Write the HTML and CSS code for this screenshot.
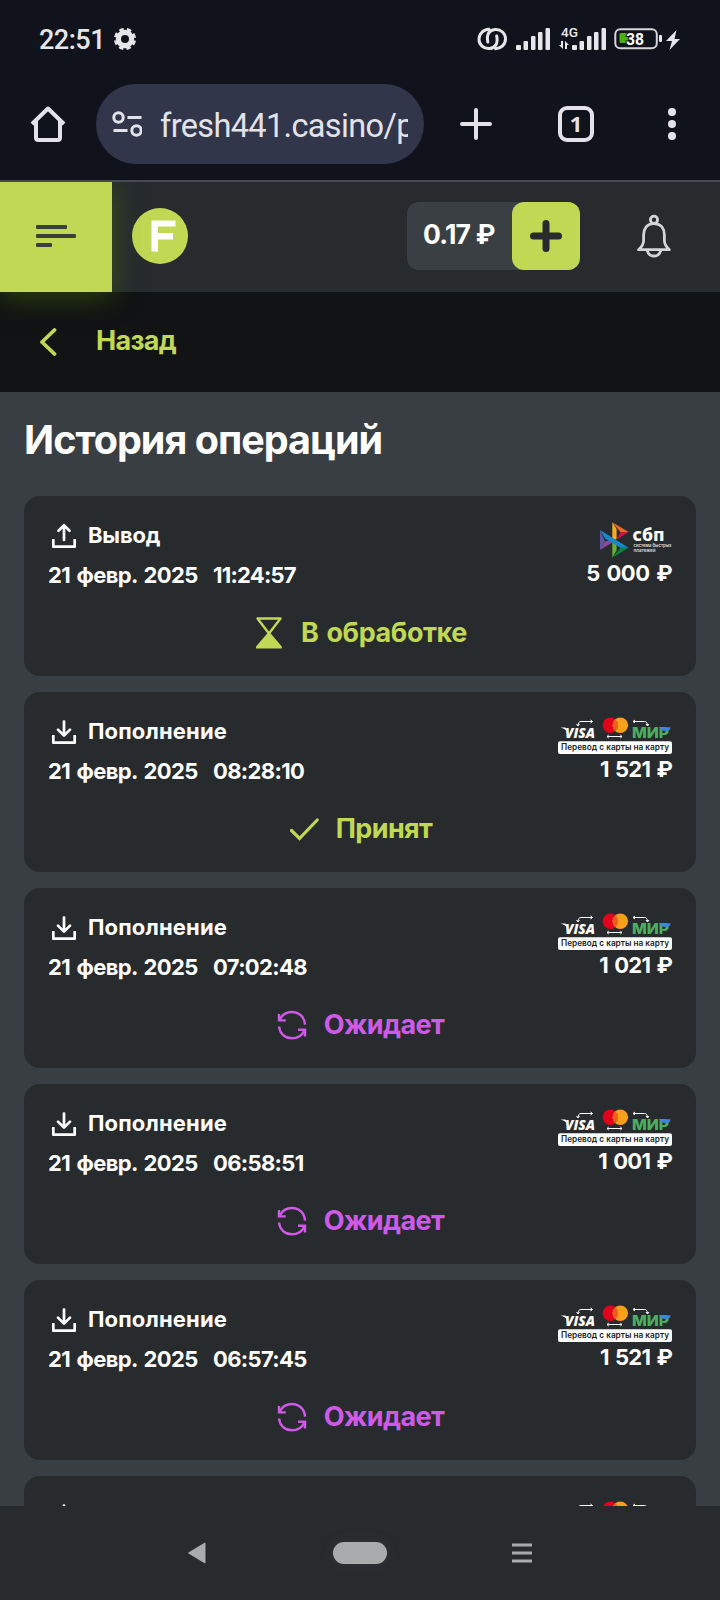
FILE: index.html
```html
<!DOCTYPE html>
<html lang="ru">
<head>
<meta charset="utf-8">
<title>История операций</title>
<link rel="stylesheet" href="styles.css">
</head>
<body>
<svg class="defs" width="0" height="0" aria-hidden="true">
  <symbol id="upload" viewBox="0 0 32 32"><g fill="none" stroke="#fff" stroke-width="2.7" stroke-linecap="round" stroke-linejoin="round"><path d="M16 20V6M10.500 10.800 16 5.300l5.500 5.500"/><path stroke-linecap="square" d="M5.300 20.300v6.400h21.400v-6.400"/></g></symbol>
  <symbol id="download" viewBox="0 0 32 32"><g fill="none" stroke="#fff" stroke-width="2.7" stroke-linecap="round" stroke-linejoin="round"><path d="M16 5.500V19M10 13.600l6 6 6-6"/><path stroke-linecap="square" d="M5.300 20.300v6.400h21.400v-6.400"/></g></symbol>
  <symbol id="hourglass" viewBox="0 0 32 32"><path d="M4.500 1.500h23L16 16.500z" fill="none" stroke="#c0d853" stroke-width="2.400" stroke-linejoin="round"/><path d="M16 14.500 28.800 29.500v2H3v-2z" fill="#c0d853"/></symbol>
  <symbol id="check" viewBox="0 0 32 32"><path d="M3.500 17.500l8 8L29.200 7" fill="none" stroke="#c0d853" stroke-width="3.200" stroke-linecap="round" stroke-linejoin="miter"/></symbol>
  <symbol id="refresh" viewBox="0 0 32 32"><g fill="none" stroke="#d05ae8" stroke-width="2.400"><path d="M29 15.600C28.500 8 23 3 16 3 10.500 3 6 6 3.800 10.500"/><path d="M3 5v6.400h6.800"/><path d="M3 17.500C3.700 24.500 9 29.300 16 29.300c5.500 0 10-2.800 12.200-7.300"/><path d="M29 27.500v-6.800h-7"/></g></symbol>
</svg>
<div class="phone">
  <div class="statusbar">
    <span class="clock">22:51</span>
    <svg class="gear" width="24" height="24" viewBox="0 0 24 24"><circle cx="12" cy="12" r="6.600" fill="none" stroke="#e6e6ea" stroke-width="5.200"/><circle cx="12" cy="12" r="9.700" fill="none" stroke="#e6e6ea" stroke-width="2.800" stroke-dasharray="4.400 3.218" stroke-dashoffset="-1.600"/></svg>
    <svg class="indicators" width="206" height="30" viewBox="0 0 206 30">
      <g fill="none" stroke="#e6e6ea" stroke-width="3" stroke-linecap="round"><path d="M12 5.200C6.500 5.400 2 9.700 2 15.200s4.500 9.800 10.500 9.300c6-.5 8.700-5 7.200-12.500"/><path d="M18.500 24.800c5.500-.2 10-4.300 10-9.800S24 5 18 5.500c-6 .5-8.700 5-7.200 12.500"/></g>
      <g fill="#e6e6ea"><rect x="39" y="21" width="5" height="5" rx="1"/><rect x="46.500" y="17" width="4.500" height="9" rx="1"/><rect x="54" y="12" width="4.500" height="14" rx="1"/><rect x="61" y="8" width="4.500" height="18" rx="1"/><rect x="68.500" y="4" width="4.500" height="22" rx="1"/>
      <rect x="95" y="21" width="5" height="5" rx="1"/><rect x="102.500" y="17" width="4.500" height="9" rx="1"/><rect x="110" y="12" width="4.500" height="14" rx="1"/><rect x="117" y="8" width="4.500" height="18" rx="1"/><rect x="124.500" y="4" width="4.500" height="22" rx="1"/>
      <path d="M84 17h2v8l-4-4h2zM89 25h-1v-8l4 4h-2v4z"/><rect x="182" y="11" width="3" height="7" rx="1"/><path d="M199.500 6 189 17h6l-2.500 9L203 15h-5.500z"/></g>
      <text class="net" x="84" y="13" textLength="17" lengthAdjust="spacingAndGlyphs">4G</text>
      <rect x="138.300" y="5.300" width="41.500" height="19" rx="5" fill="none" stroke="#d5d5da" stroke-width="2"/><path d="M144 9h8v10h-8q-1.500 0-1.500-1.500v-7Q142.500 9 144 9z" fill="#4caf12"/>
      <text class="charge" x="149" y="21" textLength="18" lengthAdjust="spacingAndGlyphs">38</text>
    </svg>
  </div>
  <div class="browser">
    <svg width="36" height="36" viewBox="0 0 36 36"><path d="M2 18 18 2.500 34 18M6 15v16.500Q6 34 8.500 34h19q2.500 0 2.500-2.500V15" fill="none" stroke="#e4e2e9" stroke-width="4" stroke-linejoin="round"/></svg>
    <div class="address">
      <svg width="30" height="26" viewBox="0 0 30 26" fill="none" stroke="#e4e2e9" stroke-width="3"><circle cx="6.500" cy="6.500" r="4.700"/><circle cx="24.500" cy="19.500" r="4.700"/><path d="M15.500 6.500h14M1.500 19.500h14"/></svg>
      <span class="url">fresh441.casino/p</span>
    </div>
    <svg class="newtab" width="32" height="32" viewBox="0 0 32 32"><path d="M16 2v28M2 16h28" stroke="#e4e2e9" stroke-width="4" stroke-linecap="round"/></svg>
    <span class="tabs">1</span>
    <svg class="more" width="8" height="32" viewBox="0 0 8 32" fill="#e4e2e9"><circle cx="4" cy="4" r="4"/><circle cx="4" cy="16" r="4"/><circle cx="4" cy="28" r="4"/></svg>
  </div>
  <header class="header">
    <div class="menu"><svg width="40" height="24" viewBox="0 0 40 24" fill="#3a4038"><rect y="1" width="31" height="4" rx="1"/><rect y="10" width="40" height="4" rx="1"/><rect y="19" width="16" height="4" rx="1"/></svg></div>
    <svg class="logo" width="56" height="56" viewBox="0 0 56 56"><circle cx="28" cy="28" r="28" fill="#c0d853"/><path d="M19.500 12.500h24v6H26v6.500h15v6.500H26v12h-6.500z" fill="#fff"/></svg>
    <div class="balance"><span class="money">0.17 ₽</span><span class="plus"><svg width="32" height="32" viewBox="0 0 32 32"><path d="M16 3.500v25M3.500 16h25" stroke="#272b2d" stroke-width="7" stroke-linecap="round"/></svg></span></div>
    <svg class="bell" width="36" height="44" viewBox="0 0 36 44" fill="none" stroke="#d3d4d5" stroke-width="2.800" stroke-linejoin="round"><circle cx="18" cy="5.800" r="3.600"/><path d="M18 9.600C10.500 9.600 7.600 15 7.600 21v5.500c0 3.500-2 6.500-5 9.200h30.800c-3-2.700-5-5.700-5-9.200V21c0-6-2.900-11.400-10.400-11.400zM11 36c1 3.800 3.500 6 7 6s6-2.200 7-6"/></svg>
  </header>
  <nav class="back"><svg width="18" height="30" viewBox="0 0 18 30"><path d="M15.500 3 3 15l12.500 12" fill="none" stroke="#c0d853" stroke-width="3.800" stroke-linecap="round" stroke-linejoin="round"/></svg><span>Назад</span></nav>
  <main class="content">
    <h1>История операций</h1>
    <div class="list"></div>
  </main>
  <footer class="navbar">
    <svg width="20" height="24" viewBox="0 0 20 24"><path d="M18 2v20L1.500 12z" fill="#aaabad" stroke="#aaabad" stroke-linejoin="round"/></svg>
    <span class="pill"></span>
    <svg width="20" height="20" viewBox="0 0 20 20"><path d="M0 2h20M0 10h20M0 18h20" stroke="#aaabad" stroke-width="3"/></svg>
  </footer>
</div>
<script src="app.js"></script>
</body>
</html>
```
FILE: app.js
```js
const cardsArt = `
  <g fill="none" stroke="#fff" stroke-width="1"><path d="M20 8.500c0-2.500 1-4 3-4h11M32.500 3l2 1.500-2 1.500M18.500 7l1.500 2 1.500-2M89.500 8.500c0-2.500-1-4-3-4h-11M77 3l-2 1.500 2 1.500M88 7l1.500 2 1.500-2M49 19.500h15M50.700 18 49 19.500l1.700 1.500M62.300 18l1.700 1.500-1.700 1.500"/></g>
  <circle cx="52.400" cy="8.200" r="7.800" fill="#e3001b"/><circle cx="62.300" cy="8.200" r="7.800" fill="#f9a01b"/><path d="M57.350 2.200a7.800 7.800 0 0 1 0 12 7.800 7.800 0 0 1 0-12z" fill="#f25c1c"/>
  <path d="M2.500 10.500h5l2.500 5c-2-2.800-4.500-4.400-7.500-5z" fill="#fff"/>`;
const cardsLogo = `<svg class="method" viewBox="0 -1 114 40">${cardsArt}
  <text class="visa" x="7" y="21.300" textLength="30" lengthAdjust="spacingAndGlyphs">VISA</text>
  <text class="mir" x="74" y="21.300" textLength="37" lengthAdjust="spacingAndGlyphs">МИР</text>
  <path d="M101 10.200h11.500c0 2.500-1.500 3.800-4 3.800-3.500 0-6-1-7.500-3.800z" fill="#3a86e0"/>
  <rect y="24.300" width="114" height="12.700" rx="2" fill="#fff"/>
  <text class="cardtext" x="3" y="33.300" textLength="108" lengthAdjust="spacingAndGlyphs">Перевод с карты на карту</text></svg>`;
const sbpLogo = `<svg class="method" viewBox="0 0 114 40">
  <path d="M42 10v20l5-8.500z" fill="#5b57a2"/><path d="M42 30l5-8.500 7.300-2v3z" fill="#90489a"/>
  <path d="M54.300 2.300V21l4.300-2V9z" fill="#faad1c"/><path d="M54.300 2.300 70.700 12l-8.200.2z" fill="#ea6a26"/><path d="M70.700 12l-8.200.2-4 7.300z" fill="#d5124f"/>
  <path d="M54.300 19v18.700l4.300-7.500V21z" fill="#66b032"/><path d="M54.300 37.700 70.700 27.700H62.500z" fill="#07853d"/><path d="M42 10l28.700 17.700H62.500L47 18.500z" fill="#1787c8"/>
  <text class="sbp" x="74.500" y="21.200" textLength="32" lengthAdjust="spacingAndGlyphs">сбп</text>
  <text class="sbpsmall" x="75.500" y="27.300" textLength="38" lengthAdjust="spacingAndGlyphs">система быстрых</text><text class="sbpsmall" x="75.500" y="32" textLength="22" lengthAdjust="spacingAndGlyphs">платежей</text></svg>`;

const states = {
  process: ["hourglass", "В обработке"],
  accepted: ["check", "Принят"],
  waiting: ["refresh", "Ожидает"]
};
const operations = [
  ["out", "11:24:57", "5 000 ₽", "process"],
  ["in", "08:28:10", "1 521 ₽", "accepted"],
  ["in", "07:02:48", "1 021 ₽", "waiting"],
  ["in", "06:58:51", "1 001 ₽", "waiting"],
  ["in", "06:57:45", "1 521 ₽", "waiting"]
];
const icon = name => `<svg class="i32"><use href="#${name}"/></svg>`;

document.querySelector(".list").innerHTML = operations.map(([kind, time, sum, state]) => `
  <article class="card ${kind}">
    <div class="row">
      <div>
        <div class="type">${icon(kind === "out" ? "upload" : "download")}<span>${kind === "out" ? "Вывод" : "Пополнение"}</span></div>
        <div class="when"><span class="date">21 февр. 2025</span><span class="time">${time}</span></div>
      </div>
      <div class="pay">${kind === "out" ? sbpLogo : cardsLogo}<span>${sum}</span></div>
    </div>
    <div class="state ${state}">${icon(states[state][0])}<span>${states[state][1]}</span></div>
  </article>`).join("") + `
  <article class="card"><div class="row">${icon("download")}<svg class="method" viewBox="0 -1 114 40">${cardsArt}</svg></div></article>`;
```
FILE: styles.css
```css
* { box-sizing: border-box; }
body { margin: 0; background: #10131b; color: #fff; font-family: Inter, "Noto Sans", sans-serif; font-weight: 700; }
svg { display: block; flex: none; }
.defs { position: absolute; }
.phone { width: 720px; height: 1600px; overflow: hidden; display: flex; flex-direction: column; }
.phone > * { flex: none; }
.statusbar { height: 78px; padding: 0 38px; display: flex; align-items: center; color: #e6e6ea; font-family: Roboto, sans-serif; }
.clock { font-size: 27px; font-weight: 500; line-height: 32px; width: 75px; padding: 2px 0 0 1px; letter-spacing: -0.5px; }
.indicators { margin: 0 -1px 0 auto; }
.net { font: 500 13px Roboto, sans-serif; fill: #e6e6ea; }
.charge { font: 700 16px Roboto, sans-serif; fill: #fff; stroke: #10131b; stroke-width: 2px; paint-order: stroke; }
.browser { position: relative; z-index: 1; height: 104px; padding: 6px 44px 0 30px; display: flex; align-items: flex-start; background: #10131b; border-bottom: 2px solid #474a53; }
.browser > svg:first-child { margin-top: 22px; }
.address { width: 328px; height: 80px; margin-left: 30px; padding: 0 16px; border-radius: 40px; background: #32364a; display: flex; align-items: center; gap: 18px; }
.url { width: 248px; margin-top: 3px; overflow: hidden; white-space: nowrap; color: #e4e2e9; font-family: Roboto, sans-serif; font-size: 32.500px; font-weight: 400; line-height: 44px; letter-spacing: -0.65px; }
.newtab { margin: 24px 0 0 36px; }
.tabs { width: 36px; height: 36px; margin: 22px 0 0 66px; border: 4px solid #e4e2e9; border-radius: 9px; color: #e4e2e9; font-size: 22px; line-height: 26px; text-align: center; font-family: "Noto Sans", sans-serif; }
.more { margin: 24px 0 0 74px; }
.header { height: 110px; display: flex; align-items: center; background: #272b2e; }
.menu { position: relative; width: 112px; height: 110px; display: flex; align-items: center; padding: 0 0 2px 36px; background: #c0d853; box-shadow: 0 4px 26px rgba(79, 122, 0, 0.5); }
.logo { margin: 0 219px 2px 20px; }
.balance { width: 173px; height: 68px; margin-bottom: 2px; display: flex; justify-content: space-between; border-radius: 12px; background: #3a3f43; }
.money { padding-left: 16px; font-size: 26.500px; line-height: 64px; letter-spacing: -0.8px; white-space: nowrap; }
.plus { width: 68px; height: 68px; display: grid; place-items: center; border-radius: 12px; background: #c0d853; }
.bell { margin: 0 0 2px 56px; }
.back { height: 100px; padding-left: 39px; display: flex; align-items: center; gap: 39px; background: #111314; color: #c0d853; font-size: 27px; line-height: 32px; letter-spacing: -0.7px; }
.back span { padding-bottom: 2px; }
.content { height: 1114px; overflow: hidden; padding: 0 24px; background: #393e42; }
h1 { margin: 0; height: 104px; padding-top: 23px; font-size: 39.500px; line-height: 50px; letter-spacing: -0.97px; white-space: nowrap; }
.list { display: flex; flex-direction: column; gap: 16px; }
.card { height: 180px; padding: 24px 24px 0; border-radius: 16px; background: #272b2e; }
.row { display: flex; justify-content: space-between; height: 97px; }
.i32 { width: 32px; height: 32px; }
.type { display: flex; gap: 8px; height: 32px; font-size: 22px; line-height: 31px; letter-spacing: 0.15px; }
.out .type { letter-spacing: -0.2px; }
.when { display: flex; font-size: 22px; line-height: 46px; white-space: nowrap; }
.date { width: 165px; letter-spacing: -0.65px; word-spacing: 2px; }
.time { letter-spacing: -0.65px; }
.out .time { letter-spacing: -0.75px; }
.pay { display: flex; flex-direction: column; align-items: flex-end; font-size: 22px; line-height: 27px; letter-spacing: -0.8px; word-spacing: 2px; white-space: nowrap; }
.out .pay { letter-spacing: -0.5px; word-spacing: 2px; }
.method { width: 114px; height: 40px; letter-spacing: 0; word-spacing: 0; }
.state { display: flex; justify-content: center; gap: 16px; color: #c0d853; font-size: 27px; line-height: 31px; letter-spacing: -0.6px; }
.process { letter-spacing: -0.4px; word-spacing: 2px; }
.waiting { color: #d05ae8; }
.visa { font: italic 800 14px "Open Sans", sans-serif; fill: #fff; }
.mir { font: 800 15px Inter, sans-serif; fill: #4caf60; }
.cardtext { font: 600 8.500px Inter, sans-serif; fill: #202326; }
.sbp { font: 800 18px "Noto Sans", sans-serif; fill: #fff; }
.sbpsmall { font: 600 4.500px Inter, sans-serif; fill: #ddd; }
.navbar { height: 94px; padding: 0 188px 0 187px; display: flex; align-items: center; justify-content: space-between; background: #272b2e; }
.pill { width: 54px; height: 22px; border-radius: 11px; background: #aaabad; box-shadow: 0 0 12px rgba(80, 72, 76, 0.35); }
```
